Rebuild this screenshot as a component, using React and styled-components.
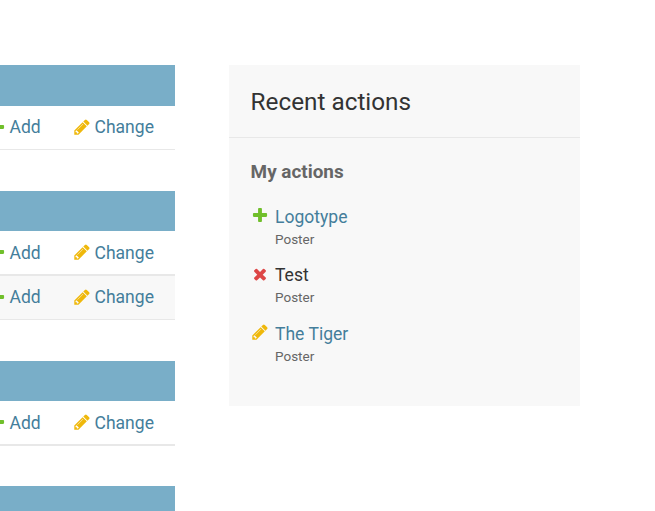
import React from "react";
import styled, { createGlobalStyle } from "styled-components";

const GlobalStyle = createGlobalStyle`
  * { box-sizing: border-box; }
  body {
    margin: 0;
    background: #fff;
    color: #333;
    font-family: Roboto, "Liberation Sans", sans-serif;
    font-size: 17.55px;
    overflow: hidden;
  }
`;

const icons = {
  add: {
    color: "#70bf2b",
    d: "M1600 796v192q0 40-28 68t-68 28h-416v416q0 40-28 68t-68 28h-192q-40 0-68-28t-28-68v-416h-416q-40 0-68-28t-28-68v-192q0-40 28-68t68-28h416v-416q0-40 28-68t68-28h192q40 0 68 28t28 68v416h416q40 0 68 28t28 68z",
  },
  change: {
    color: "#efb80b",
    d: "M491 1536l91-91-235-235-91 91v107h128v128h107zm523-928q0-22-22-22-10 0-17 7l-542 542q-7 7-7 17 0 22 22 22 10 0 17-7l542-542q7-7 7-17zm-54-192l416 416-832 832h-416v-416zm683 96q0 53-37 90l-166 166-416-416 166-165q36-38 90-38 53 0 91 38l235 234q37 39 37 91z",
  },
  remove: {
    color: "#dd4646",
    d: "M1490 1322q0 40-28 68l-136 136q-28 28-68 28t-68-28l-294-294-294 294q-28 28-68 28t-68-28l-136-136q-28-28-28-68t28-68l294-294-294-294q-28-28-28-68t28-68l136-136q28-28 68-28t68 28l294 294 294-294q28-28 68-28t68 28l136 136q28 28 28 68t-28 68l-294 294 294 294q28 28 28 68z",
  },
};

const Svg = styled.svg`
  flex: none;
  display: block;
  width: 18px;
  height: 18px;
`;

const Icon = ({ name }) => (
  <Svg viewBox="0 0 1792 1792" aria-hidden="true">
    <path fill={icons[name].color} d={icons[name].d} />
  </Svg>
);

const Page = styled.div`
  display: flex;
  align-items: flex-start;
  gap: 54px;
  height: 511px;
  padding-top: 65px;
  overflow: hidden;
`;

const Modules = styled.main`
  flex: none;
  width: 175px;
`;

const Module = styled.section`
  margin-bottom: ${(p) => p.$gap}px;
`;

const Caption = styled.div`
  height: ${(p) => p.$height}px;
  background: #79aec8;
`;

const Row = styled.div`
  display: flex;
  height: ${(p) => p.$height}px;
  padding-top: ${(p) => p.$top}px;
  background: ${(p) => (p.$shaded ? "#f8f8f8" : "#fff")};
  border-bottom: ${(p) => p.$line}px solid #e8e8e8;
`;

const ActionLink = styled.a`
  display: flex;
  flex: none;
  gap: 3.5px;
  width: 85px;
  margin-left: ${(p) => (p.$first ? -12 : 0)}px;
  color: #447e9b;
  line-height: 20px;
  white-space: nowrap;

  svg { margin-top: ${(p) => p.$iconTop}px; }
`;

const Sidebar = styled.aside`
  flex: none;
  width: 351px;
  height: 341px;
  background: #f8f8f8;
`;

const Title = styled.h2`
  height: 73px;
  margin: 0;
  padding: 22px 21.6px 0;
  border-bottom: 1px solid #e8e8e8;
  font-size: 24.3px;
  font-weight: 400;
  line-height: 30px;
`;

const Subtitle = styled.h3`
  margin: 0;
  padding: 22px 21.6px 0;
  color: #666;
  font-size: 18.9px;
  font-weight: 700;
  line-height: 24px;
`;

const ActionList = styled.ul`
  margin: 22px 0 0;
  padding: 0 22px;
  list-style: none;
`;

const ActionItem = styled.li`
  display: flex;
  gap: 6px;
  height: ${(p) => p.$height}px;

  svg { margin-top: ${(p) => p.$iconTop}px; }
`;

const ActionName = styled.div`
  display: block;
  height: 22px;
  color: ${(p) => (p.$linked ? "#447e9b" : "#333")};
  line-height: 22px;
`;

const Kind = styled.div`
  color: #666;
  font-size: 13.5px;
  line-height: 22px;
`;

const modules = [
  { caption: 41, gap: 41, rows: [{ height: 44, top: 11, line: 1, iconTop: 1 }] },
  {
    caption: 40,
    gap: 41,
    rows: [
      { height: 45, top: 12, line: 2, iconTop: 0 },
      { height: 44, top: 11, line: 1, iconTop: 1, shaded: true },
    ],
  },
  { caption: 40, gap: 40, rows: [{ height: 45, top: 12, line: 2, iconTop: 0 }] },
  { caption: 40, gap: 0, rows: [] },
];

const actions = [
  { icon: "add", name: "Logotype", linked: true, height: 58, iconTop: 0 },
  { icon: "remove", name: "Test", linked: false, height: 59, iconTop: 1 },
  { icon: "change", name: "The Tiger", linked: true, height: 58, iconTop: 0 },
];

export default function App() {
  return (
    <>
      <GlobalStyle />
      <Page>
        <Modules>
          {modules.map((m, i) => (
            <Module key={i} $gap={m.gap}>
              <Caption $height={m.caption} />
              {m.rows.map((r, j) => (
                <Row key={j} $height={r.height} $top={r.top} $line={r.line} $shaded={r.shaded}>
                  <ActionLink $first $iconTop={r.iconTop}><Icon name="add" />Add</ActionLink>
                  <ActionLink $iconTop={r.iconTop}><Icon name="change" />Change</ActionLink>
                </Row>
              ))}
            </Module>
          ))}
        </Modules>
        <Sidebar>
          <Title>Recent actions</Title>
          <Subtitle>My actions</Subtitle>
          <ActionList>
            {actions.map((a) => (
              <ActionItem key={a.name} $height={a.height} $iconTop={a.iconTop}>
                <Icon name={a.icon} />
                <div>
                  <ActionName as={a.linked ? "a" : "div"} $linked={a.linked}>{a.name}</ActionName>
                  <Kind>Poster</Kind>
                </div>
              </ActionItem>
            ))}
          </ActionList>
        </Sidebar>
      </Page>
    </>
  );
}
